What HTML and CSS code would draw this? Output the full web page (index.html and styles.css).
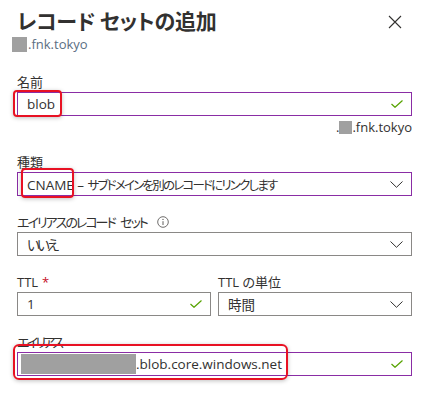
FILE: index.html
```html
<!DOCTYPE html>
<html lang="ja">
<head>
    <meta charset="UTF-8">
    <meta name="viewport" content="width=device-width, initial-scale=1.0">
    <title>レコード セットの追加</title>
    <link rel="stylesheet" href="styles.css">
</head>
<body>
    <div class="panel">
        <div class="panel__head">
            <div>
                <h1 class="panel__title">レコード セットの追加</h1>
                <div class="panel__sub"><span class="mask mask--sq"></span>.fnk.tokyo</div>
            </div>
            <button class="close" aria-label="閉じる">
                <svg width="14" height="14" viewBox="0 0 14 14"><path d="M1 1L13 13M13 1L1 13" stroke="#323130" stroke-width="1.1" fill="none"/></svg>
            </button>
        </div>

        <div class="field field--first">
            <div class="field__label">名前</div>
            <div class="box box--active">
                <span class="mark mark--name"></span>
                <span class="box__text">blob</span>
                <svg class="check" width="12" height="8" viewBox="0 0 12 8"><path d="M0.5 4L4 7.3L11.5 0.5" stroke="#57a300" stroke-width="1.2" fill="none"/></svg>
            </div>
            <div class="field__suffix">.<span class="mask mask--sm"></span>.fnk.tokyo</div>
        </div>

        <div class="field">
            <div class="field__label">種類</div>
            <div class="box box--active">
                <span class="mark mark--type"></span>
                <span class="box__text">CNAME – <span class="kana kana--box">サブドメインを別のレコードにリンクします</span></span>
                <svg class="chev" width="13" height="7" viewBox="0 0 13 7"><path d="M0.5 0.5L6.5 6.3L12.5 0.5" stroke="#323130" stroke-width="1" fill="none"/></svg>
            </div>
        </div>

        <div class="field">
            <div class="field__label"><span class="kana">エイリアスのレコード セット</span>
                <svg class="info" width="12" height="12" viewBox="0 0 12 12"><circle cx="6" cy="6" r="5.3" stroke="#605e5c" stroke-width="0.9" fill="none"/><path d="M6 5.2V9" stroke="#605e5c" stroke-width="1"/><circle cx="6" cy="3.4" r="0.7" fill="#605e5c"/></svg>
            </div>
            <div class="box">
                <span class="box__text"><span class="kana kana--wide">いいえ</span></span>
                <svg class="chev" width="13" height="7" viewBox="0 0 13 7"><path d="M0.5 0.5L6.5 6.3L12.5 0.5" stroke="#323130" stroke-width="1" fill="none"/></svg>
            </div>
        </div>

        <div class="field field--row">
            <div class="col">
                <div class="field__label">TTL <span class="req">*</span></div>
                <div class="box">
                    <span class="box__text">1</span>
                    <svg class="check" width="12" height="8" viewBox="0 0 12 8"><path d="M0.5 4L4 7.3L11.5 0.5" stroke="#57a300" stroke-width="1.2" fill="none"/></svg>
                </div>
            </div>
            <div class="col">
                <div class="field__label">TTL の単位</div>
                <div class="box">
                    <span class="box__text">時間</span>
                    <svg class="chev" width="13" height="7" viewBox="0 0 13 7"><path d="M0.5 0.5L6.5 6.3L12.5 0.5" stroke="#323130" stroke-width="1" fill="none"/></svg>
                </div>
            </div>
        </div>

        <div class="field">
            <div class="field__label"><span class="kana kana--wide">エイリアス</span></div>
            <div class="box box--active">
                <span class="mark mark--alias"></span>
                <span class="box__text"><span class="mask mask--long"></span>.blob.core.windows.net</span>
                <svg class="check" width="12" height="8" viewBox="0 0 12 8"><path d="M0.5 4L4 7.3L11.5 0.5" stroke="#57a300" stroke-width="1.2" fill="none"/></svg>
            </div>
        </div>
    </div>
</body>
</html>
```

FILE: styles.css
```css
*, *::before, *::after {
    box-sizing: border-box;
}
body {
    margin: 0;
    background: #fff;
    color: #323130;
    font-family: 'Open Sans', 'Noto Sans CJK JP', sans-serif;
    font-feature-settings: "palt";
}
.panel {
    width: 427px;
    height: 398px;
    padding: 0 15px 0 17px;
}
.panel__head {
    display: flex;
    justify-content: space-between;
    align-items: flex-start;
}
.panel__title {
    margin: 5px 0 0 0;
    font-family: 'Noto Sans CJK JP', sans-serif;
    font-size: 21px;
    font-weight: 700;
    line-height: 30px;
    color: #323130;
    letter-spacing: -0.2px;
}
.panel__sub {
    margin-left: -5px;
    font-size: 13px;
    line-height: 18px;
    color: #5b6e82;
    display: flex;
    align-items: center;
}
.close {
    margin: 15px 10px 0 0;
    padding: 0;
    border: none;
    background: none;
    line-height: 0;
}
.mask {
    display: inline-block;
    background: #a0a0a0;
    flex: none;
}
.mask--sq {
    width: 15px;
    height: 15px;
    margin-right: 1px;
}
.mask--sm {
    width: 13px;
    height: 13px;
    vertical-align: -2px;
}
.mask--long {
    width: 115px;
    height: 20px;
    margin-left: -6px;
    vertical-align: -5px;
}
.kana {
    letter-spacing: -2px;
    word-spacing: 4px;
}
.kana--box {
    font-size: 12.5px;
    letter-spacing: -1.8px;
}
.kana--wide {
    letter-spacing: -2.8px;
}
.field {
    margin-top: 17px;
}
.field--first {
    margin-top: 20px;
}
.field--row {
    display: grid;
    grid-template-columns: 1fr 1fr;
    gap: 7px;
}
.field__label {
    font-size: 13px;
    line-height: 18px;
    margin-bottom: 1px;
    display: flex;
    align-items: center;
    gap: 4px;
}
.req {
    color: #c50f1f;
}
.info {
    margin-left: 6px;
}
.box {
    position: relative;
    height: 24px;
    border: 1px solid #8a8886;
    display: flex;
    align-items: center;
    padding: 0 8px 0 9px;
    font-size: 13.5px;
}
.box--active {
    border-color: #8a2da5;
}
.box__text {
    flex: 1;
    white-space: nowrap;
}
.field__suffix {
    text-align: right;
    font-size: 13px;
    line-height: 18px;
    margin-top: 2px;
}
.mark {
    position: absolute;
    border: 2px solid #e81123;
    border-radius: 4px;
    box-shadow: 0 1px 4px rgba(0, 0, 0, 0.25);
    pointer-events: none;
}
.mark--name {
    left: -5px;
    top: -3px;
    width: 49px;
    height: 27px;
}
.mark--type {
    left: 3px;
    top: -5px;
    width: 53px;
    height: 30px;
}
.mark--alias {
    left: -5px;
    top: -9px;
    width: 275px;
    height: 36px;
    border-radius: 6px;
}
```
